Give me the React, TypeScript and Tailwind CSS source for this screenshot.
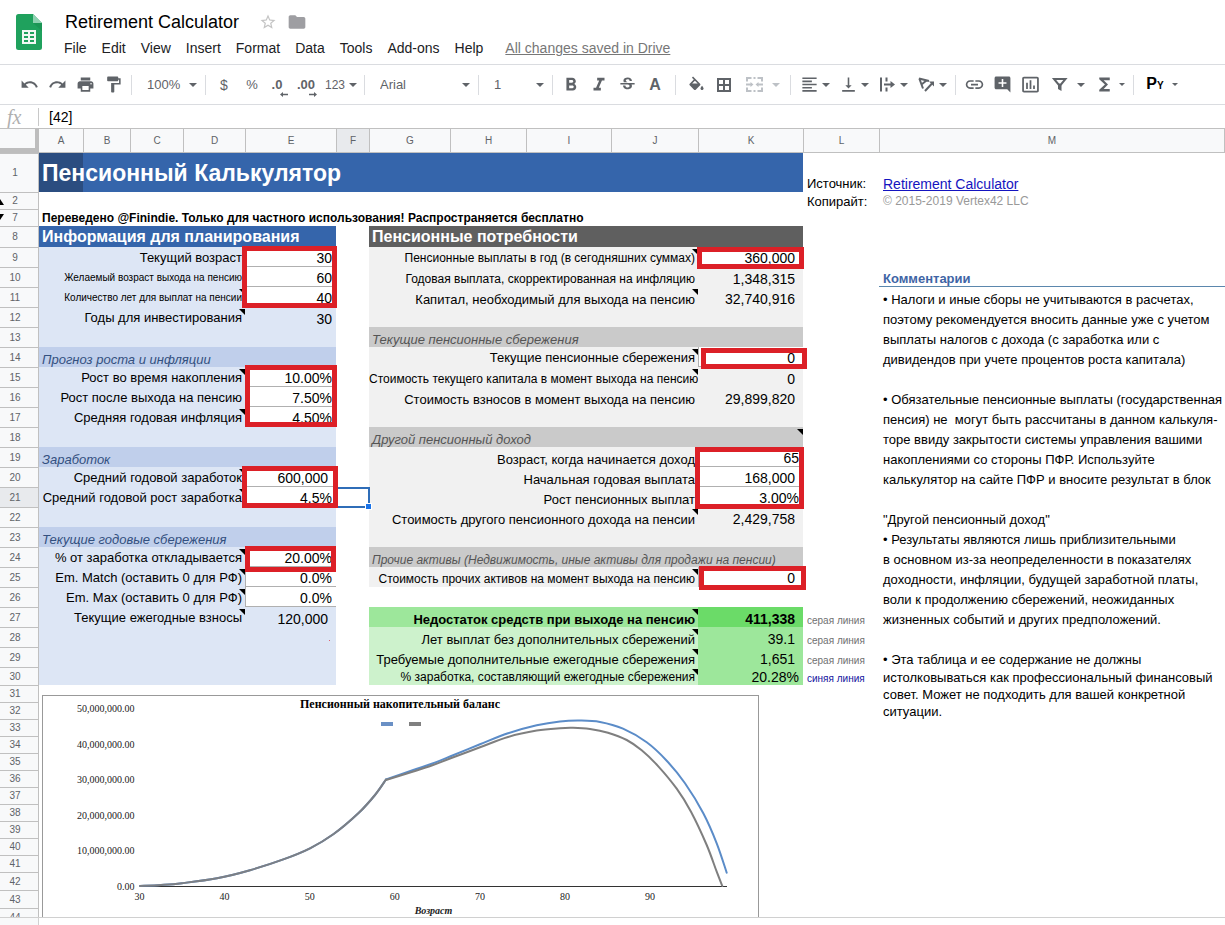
import type { ReactNode } from "react";
import {
  MdAddComment,
  MdFolder,
  MdFormatAlignLeft,
  MdFormatBold,
  MdFormatItalic,
  MdFormatPaint,
  MdFunctions,
  MdInsertChartOutlined,
  MdInsertLink,
  MdPrint,
  MdRedo,
  MdStarBorder,
  MdStrikethroughS,
  MdUndo,
  MdVerticalAlignBottom,
} from "react-icons/md";

const MENUS = ["File", "Edit", "View", "Insert", "Format", "Data", "Tools", "Add-ons", "Help"];

function SheetsLogo() {
  return (
    <svg viewBox="0 0 26 36" className="h-9 w-[26px]" aria-hidden="true">
      <path d="M2.500 0H17l9 9v24.500a2.500 2.500 0 0 1-2.500 2.500h-21A2.500 2.500 0 0 1 0 33.500V2.500A2.500 2.500 0 0 1 2.500 0z" fill="#1fa15d" />
      <path d="M17 0l9 9h-9z" fill="#8ed1b1" />
      <path d="M17 9h9v8z" fill="#188a4d" opacity=".5" />
      <path fillRule="evenodd" fill="#f1f8f4" d="M6 16h14v14H6zM8 18v2h4v-2zM14 18v2h4v-2zM8 22v2h4v-2zM14 22v2h4v-2zM8 26v2h4v-2zM14 26v2h4v-2z" />
    </svg>
  );
}

function Caret({ small = false }: { small?: boolean }) {
  return (
    <svg viewBox="0 0 8 4" className={small ? "h-[3px] w-1.5 shrink-0" : "h-1 w-2 shrink-0"} aria-hidden="true">
      <path d="M0 0h8L4 4z" fill="currentColor" />
    </svg>
  );
}

function Sep({ wide = false }: { wide?: boolean }) {
  return <span className={wide ? "mx-1.5 h-5 w-px shrink-0 bg-[#dadce0]" : "mx-1 h-5 w-px shrink-0 bg-[#dadce0]"} />;
}

function Tool({ label, className = "w-7", children }: { label: string; className?: string; children: ReactNode }) {
  return (
    <button type="button" aria-label={label} className={`flex h-7 shrink-0 items-center justify-center ${className}`}>
      {children}
    </button>
  );
}

function Picker({ label, value, className }: { label: string; value: string; className: string }) {
  return (
    <label className={`relative flex h-7 shrink-0 items-center ${className}`}>
      <select aria-label={label} defaultValue={value} className="h-full w-full appearance-none bg-transparent pl-[11px] text-[13px] outline-none">
        <option>{value}</option>
      </select>
      <span className="pointer-events-none absolute right-1 top-3">
        <Caret />
      </span>
    </label>
  );
}

function FillIcon() {
  return (
    <svg viewBox="0 -2 24 24" className="size-[19px]" fill="currentColor" aria-hidden="true">
      <path d="M16.560 8.940L7.620 0 6.210 1.410l2.380 2.380-5.150 5.150c-.59.59-.59 1.540 0 2.120l5.500 5.500c.29.29.68.44 1.060.44s.77-.15 1.060-.44l5.500-5.500c.59-.58.59-1.530 0-2.120zM6.500 8.700L10 5.210l3.500 3.490zM19 11.500s-2 2.170-2 3.500c0 1.100.9 2 2 2s2-.9 2-2c0-1.330-2-3.500-2-3.500z" />
    </svg>
  );
}

function BordersIcon() {
  return (
    <svg viewBox="0 0 14 14" className="size-3.5" fill="none" stroke="currentColor" strokeWidth="2" aria-hidden="true">
      <path d="M1 1h12v12H1zM7 1v12M1 7h12" />
    </svg>
  );
}

function MergeIcon() {
  return (
    <svg viewBox="0 0 19 19" className="size-[19px]" fill="none" stroke="currentColor" strokeWidth="2" aria-hidden="true">
      <path d="M2 6.500V3h4.500M8.500 3h2M12.500 3H17v3.500M2 12.500V16h4.500M8.500 16h2M12.500 16H17v-3.500M1 9.500h5M13 9.500h5" />
      <path d="M5.500 7v5L8.500 9.500zM13.500 7v5l-3-2.500z" fill="currentColor" stroke="none" />
    </svg>
  );
}

function WrapIcon() {
  return (
    <svg viewBox="0 0 19 19" className="size-[19px]" fill="none" stroke="currentColor" strokeWidth="2" aria-hidden="true">
      <path d="M3 2.500v14M8.500 2.500v4M8.500 12.500v4M6 9.500h8" />
      <path d="M12.500 6l4.500 3.500-4.500 3.500z" fill="currentColor" stroke="none" />
    </svg>
  );
}

function RotateIcon() {
  return (
    <svg viewBox="0 0 19 19" className="size-[19px]" fill="none" stroke="currentColor" aria-hidden="true">
      <path d="M2 3.500l10 2.500M2.300 3.500l3.700 10M9.500 5.500L4.500 9.500" strokeWidth="2" />
      <path d="M8 16l7-7.500" strokeWidth="2" />
      <path d="M12 6.500h5V11.500z" fill="currentColor" stroke="none" />
    </svg>
  );
}

function FilterIcon() {
  return (
    <svg viewBox="0 0 19 19" className="size-[19px]" fill="none" stroke="currentColor" strokeWidth="2" aria-hidden="true">
      <path d="M4 4h11.500l-4.500 5.500H8.500z" />
      <path d="M8 9h3.500v7L8 14z" fill="currentColor" stroke="none" />
    </svg>
  );
}

function Toolbar() {
  const s = "size-[19px]";
  return (
    <div role="toolbar" aria-label="Formatting" className="flex h-10 shrink-0 items-center overflow-hidden border-b border-[#dadce0] pl-[15px] text-[#5f6368]">
      <Tool label="Undo"><MdUndo className={s} /></Tool>
      <Tool label="Redo"><MdRedo className={s} /></Tool>
      <Tool label="Print"><MdPrint className={s} /></Tool>
      <Tool label="Paint format"><MdFormatPaint className={s} /></Tool>
      <Sep />
      <Picker label="Zoom" value="100%" className="w-[65px]" />
      <Sep />
      <Tool label="Format as currency"><span className="text-sm">$</span></Tool>
      <Tool label="Format as percent"><span className="text-[13px]">%</span></Tool>
      <Tool label="Decrease decimal places" className="w-7 pr-1.5">
        <span className="relative text-[13px] font-bold">
          .0
          <svg viewBox="0 0 8 5" className="absolute -right-1.5 bottom-[-3px] h-[5px] w-2" aria-hidden="true">
            <path d="M0 2.500L3 0v1.700h5v1.600H3V5z" fill="currentColor" />
          </svg>
        </span>
      </Tool>
      <Tool label="Increase decimal places" className="w-7 pr-1">
        <span className="relative text-[13px] font-bold">
          .00
          <svg viewBox="0 0 8 5" className="absolute -right-0.5 bottom-[-3px] h-[5px] w-2" aria-hidden="true">
            <path d="M8 2.500L5 0v1.700H0v1.600h5V5z" fill="currentColor" />
          </svg>
        </span>
      </Tool>
      <Tool label="More formats" className="w-[38px] gap-1"><span className="text-[12px]">123</span><Caret /></Tool>
      <Sep />
      <Picker label="Font" value="Arial" className="w-[105px]" />
      <Sep />
      <Picker label="Font size" value="1" className="w-[65px]" />
      <Sep />
      <Tool label="Bold"><MdFormatBold className="size-[22px]" /></Tool>
      <Tool label="Italic"><MdFormatItalic className="size-[22px]" /></Tool>
      <Tool label="Strikethrough"><MdStrikethroughS className={s} /></Tool>
      <Tool label="Text color"><span className="text-base font-bold leading-5">A</span></Tool>
      <Sep wide />
      <Tool label="Fill color"><FillIcon /></Tool>
      <Tool label="Borders"><BordersIcon /></Tool>
      <Tool label="Merge cells" className="w-12 gap-2 text-[#bdc1c6]"><MergeIcon /><Caret /></Tool>
      <Sep />
      <Tool label="Horizontal align" className="w-[39px] gap-[3px]"><MdFormatAlignLeft className={s} /><Caret /></Tool>
      <Tool label="Vertical align" className="w-[39px] gap-[3px]"><MdVerticalAlignBottom className={s} /><Caret /></Tool>
      <Tool label="Text wrapping" className="w-[39px] gap-[3px]"><WrapIcon /><Caret /></Tool>
      <Tool label="Text rotation" className="w-[39px] gap-[3px]"><RotateIcon /><Caret /></Tool>
      <Sep />
      <Tool label="Insert link"><MdInsertLink className="size-[21px]" /></Tool>
      <Tool label="Insert comment"><MdAddComment className={s} /></Tool>
      <Tool label="Insert chart"><MdInsertChartOutlined className="size-[21px]" /></Tool>
      <Tool label="Filter" className="w-[46px] gap-2"><FilterIcon /><Caret /></Tool>
      <Tool label="Functions" className="w-[39px] gap-1"><MdFunctions className="size-[21px]" /><Caret small /></Tool>
      <Sep />
      <Tool label="Input tools" className="w-12 gap-2">
        <span className="text-base font-bold leading-5 text-black">P<span className="text-[10px]">Y</span></span>
        <Caret small />
      </Tool>
    </div>
  );
}

/* ---------- sheet data ---------- */

type Frame = "e3a" | "e3b" | "e2" | "e1" | "k9" | "k14" | "k3" | "k25";

const FRAMES: Record<Frame, string> = {
  e3a: "-left-1 -right-px -top-px h-[62px]",
  e3b: "-left-px -right-px -top-0.5 h-[62px]",
  e2: "-left-1 -right-0.5 -top-px h-[42px]",
  e1: "-left-px right-0 -top-px h-[26px]",
  k9: "-left-0.5 -right-px top-0 h-[22px]",
  k14: "left-0.5 -right-1 top-px h-[21px]",
  k3: "-left-1 -right-px top-0 h-[62px]",
  k25: "left-0 -right-[3px] -top-px h-6",
};

type Size = "xs" | "s" | "m";

const SIZES: Record<Size, string> = {
  xs: "text-[10px]",
  s: "text-[12px]",
  m: "text-[13px]",
};

interface Side {
  kind?: "head" | "section" | "body" | "total";
  label?: string;
  size?: Size;
  high?: boolean;
  note?: boolean;
  value?: string;
  entry?: boolean;
  tight?: boolean;
  frame?: Frame;
  valueNote?: boolean;
}

interface Row {
  n: number;
  h: string;
  left?: Side;
  right?: Side;
  legend?: string;
  comment?: string;
}

const H = "h-5";
const S = "h-[17px]";
const T = "h-[18px]";

const ROWS: Row[] = [
  { n: 8, h: "h-[21px]", left: { kind: "head", label: "Информация для планирования" }, right: { kind: "head", label: "Пенсионные потребности" } },
  { n: 9, h: H, left: { label: "Текущий возраст", value: "30", entry: true, tight: true, frame: "e3a" }, right: { label: "Пенсионные выплаты в год (в сегодняшних суммах)", size: "s", high: true, note: true, value: "360,000", entry: true, frame: "k9" } },
  { n: 10, h: H, left: { label: "Желаемый возраст выхода на пенсию", size: "xs", value: "60", entry: true, tight: true }, right: { label: "Годовая выплата, скорректированная на инфляцию", size: "s", value: "1,348,315" }, comment: "Комментарии" },
  { n: 11, h: H, left: { label: "Количество лет для выплат на пенсии", size: "xs", note: true, value: "40", entry: true, tight: true }, right: { label: "Капитал, необходимый для выхода на пенсию", note: true, value: "32,740,916" }, comment: "• Налоги и иные сборы не учитываются в расчетах," },
  { n: 12, h: H, left: { label: "Годы для инвестирования", note: true, value: "30", tight: true }, right: {}, comment: "поэтому рекомендуется вносить данные уже с учетом" },
  { n: 13, h: H, left: {}, right: { kind: "section", label: "Текущие пенсионные сбережения" }, comment: "выплаты налогов с дохода (с заработка или с" },
  { n: 14, h: H, left: { kind: "section", label: "Прогноз роста и инфляции" }, right: { label: "Текущие пенсионные сбережения", high: true, note: true, value: "0", entry: true, frame: "k14" }, comment: "дивидендов при учете процентов роста капитала)" },
  { n: 15, h: H, left: { label: "Рост во время накопления", note: true, value: "10.00%", entry: true, tight: true, frame: "e3b" }, right: { label: "Стоимость текущего капитала в момент выхода на пенсию", size: "s", note: true, value: "0" } },
  { n: 16, h: H, left: { label: "Рост после выхода на пенсию", value: "7.50%", entry: true, tight: true }, right: { label: "Стоимость взносов в момент выхода на пенсию", value: "29,899,820" }, comment: "• Обязательные пенсионные выплаты (государственная" },
  { n: 17, h: H, left: { label: "Средняя годовая инфляция", note: true, value: "4.50%", entry: true, tight: true }, right: {}, comment: "пенсия) не  могут быть рассчитаны в данном калькуля-" },
  { n: 18, h: H, left: {}, right: { kind: "section", label: "Другой пенсионный доход", valueNote: true }, comment: "торе ввиду закрытости системы управления вашими" },
  { n: 19, h: H, left: { kind: "section", label: "Заработок" }, right: { label: "Возраст, когда начинается доход", value: "65", entry: true, tight: true, frame: "k3" }, comment: "накоплениями со стороны ПФР. Используйте" },
  { n: 20, h: H, left: { label: "Средний годовой заработок", note: true, value: "600,000", entry: true, frame: "e2" }, right: { label: "Начальная годовая выплата", value: "168,000", entry: true }, comment: "калькулятор на сайте ПФР и вносите результат в блок" },
  { n: 21, h: H, left: { label: "Средний годовой рост заработка", note: true, value: "4.5%", entry: true, tight: true }, right: { label: "Рост пенсионных выплат", value: "3.00%", entry: true, tight: true } },
  { n: 22, h: H, left: {}, right: { label: "Стоимость другого пенсионного дохода на пенсии", note: true, value: "2,429,758" }, comment: "\"Другой пенсионный доход\"" },
  { n: 23, h: H, left: { kind: "section", label: "Текущие годовые сбережения" }, right: {}, comment: "• Результаты являются лишь приблизительными" },
  { n: 24, h: H, left: { label: "% от заработка откладывается", note: true, value: "20.00%", entry: true, tight: true, frame: "e1" }, right: { kind: "section", label: "Прочие активы (Недвижимость, иные активы для продажи на пенсии)", size: "s" }, comment: "в основном из-за неопределенности в показателях" },
  { n: 25, h: H, left: { label: "Em. Match (оставить 0 для РФ)", note: true, value: "0.0%", entry: true, tight: true }, right: { label: "Стоимость прочих активов на момент выхода на пенсию", size: "s", note: true, value: "0", entry: true, frame: "k25" }, comment: "доходности, инфляции, будущей заработной платы," },
  { n: 26, h: H, left: { label: "Em. Max (оставить 0 для РФ)", note: true, value: "0.0%", entry: true, tight: true }, comment: "воли к продолжению сбережений, неожиданных" },
  { n: 27, h: H, left: { label: "Текущие ежегодные взносы", note: true, value: "120,000" }, right: { kind: "total", label: "Недостаток средств при выходе на пенсию", note: true, value: "411,338" }, legend: "серая линия", comment: "жизненных событий и других предположений." },
  { n: 28, h: H, left: {}, right: { kind: "total", label: "Лет выплат без дополнительных сбережений", note: true, value: "39.1" }, legend: "серая линия" },
  { n: 29, h: H, left: {}, right: { kind: "total", label: "Требуемые дополнительные ежегодные сбережения", note: true, value: "1,651" }, legend: "серая линия", comment: "• Эта таблица и ее содержание не должны" },
  { n: 30, h: T, left: {}, right: { kind: "total", label: "% заработка, составляющий ежегодные сбережения", size: "s", note: true, value: "20.28%", tight: true }, legend: "синяя линия", comment: "истолковываться как профессиональный финансовый" },
  { n: 31, h: S, comment: "совет. Может не подходить для вашей конкретной" },
  { n: 32, h: S, comment: "ситуации." },
  ...[33, 34, 35, 36, 37, 38, 39, 40, 41].map((n) => ({ n, h: S })),
  { n: 42, h: T },
  { n: 43, h: T },
  { n: 44, h: T },
];

/* ---------- chart ---------- */

type Point = [number, number];

const GROWTH: Point[] = [[98, 191], [119, 190], [140, 188.2], [175, 183.3], [208, 175.2], [241.3, 164.4], [268, 153.3], [291.3, 139.3], [316.3, 118.3], [333, 100], [344, 84.5]];
const BLUE_TAIL: Point[] = [[344, 84.5], [371.3, 75], [389.7, 68.8], [408, 61.5], [438, 49.3], [466, 38.3], [494.7, 30.3], [518, 26.5], [538, 25.6], [558, 27], [581, 33.7], [604.7, 47.3], [624.7, 65.7], [643, 88.3], [661.3, 118.3], [674.7, 148.3], [684.7, 177.7]];
const GRAY_TAIL: Point[] = [[344, 85], [371.3, 76.5], [389.7, 70.5], [408, 63.5], [438, 52.3], [466, 42], [494.7, 35.6], [518, 33.2], [531, 32.8], [548, 34], [566, 37.7], [584.7, 45], [599.7, 55.3], [616.3, 71.3], [634.7, 93.7], [649, 116.7], [664.7, 150], [674.7, 176.7], [680.3, 191]];

const Y_TICKS = ["50,000,000.00", "40,000,000.00", "30,000,000.00", "20,000,000.00", "10,000,000.00", "0.00"];
const X_TICKS = [30, 40, 50, 60, 70, 80, 90];

function smooth(points: Point[]): string {
  let d = `M${points[0][0]} ${points[0][1]}`;
  for (let i = 0; i < points.length - 1; i++) {
    const a = points[Math.max(i - 1, 0)];
    const b = points[i];
    const c = points[i + 1];
    const e = points[Math.min(i + 2, points.length - 1)];
    d += `C${b[0] + (c[0] - a[0]) / 6} ${b[1] + (c[1] - a[1]) / 6} ${c[0] - (e[0] - b[0]) / 6} ${c[1] - (e[1] - b[1]) / 6} ${c[0]} ${c[1]}`;
  }
  return d;
}

function BalanceChart() {
  return (
    <figure className="absolute left-[3px] top-2.5 z-10 h-[260px] w-[717px] border border-[#999] bg-white">
      <svg viewBox="1 1 715 258" className="h-[258px] w-[715px]" role="img" aria-label="Пенсионный накопительный баланс" fontFamily="'Liberation Serif', serif" fontSize="10" fill="#222">
        <text x="358" y="13" textAnchor="middle" fontSize="12" fontWeight="bold" fill="#000">Пенсионный накопительный баланс</text>
        <rect x="339" y="27" width="12" height="4" fill="#6a90c5" />
        <rect x="367" y="27" width="12" height="4" fill="#808080" />
        {Y_TICKS.map((t, i) => (
          <text key={t} x="92.500" y={17 + i * 35.6} textAnchor="end">{t}</text>
        ))}
        <path d="M98 191.500H685" stroke="#333" strokeWidth="1" />
        <g fill="none" strokeWidth="2" strokeLinecap="round">
          <path d={smooth(GROWTH)} stroke="#5f8dc9" />
          <path d={smooth(BLUE_TAIL)} stroke="#5b8cc8" />
          <path d={smooth(GROWTH)} stroke="#7c7f84" />
          <path d={smooth(GRAY_TAIL)} stroke="#7f7f7f" />
        </g>
        {X_TICKS.map((t, i) => (
          <text key={t} x={97.500 + i * 85.1} y="205" textAnchor="middle">{t}</text>
        ))}
        <text x="391.500" y="219" textAnchor="middle" fontWeight="bold" fontStyle="italic">Возраст</text>
      </svg>
    </figure>
  );
}

/* ---------- grid ---------- */

function Note() {
  return (
    <svg viewBox="0 0 6 6" className="absolute right-0 top-0.5 size-1.5" aria-hidden="true">
      <path d="M0 0h6v6z" fill="#000" />
    </svg>
  );
}

function RowHeader({ n, h }: { n: number; h: string }) {
  return (
    <th scope="row" className={`relative border-r border-t border-[#c0c0c0] pr-2 text-center align-middle text-[10px] font-normal leading-[14px] text-[#5f6368] ${h} ${n === 21 ? "bg-[#e8eaed]" : "bg-[#f8f9fa]"}`}>
      {n}
      {n === 2 && (
        <svg viewBox="0 0 4 6" className="absolute bottom-1 left-0 h-1.5 w-1" aria-hidden="true"><path d="M0 0l4 6H0z" /></svg>
      )}
      {n === 7 && (
        <svg viewBox="0 0 4 6" className="absolute left-0 top-1 h-1.5 w-1" aria-hidden="true"><path d="M0 0h4L0 6z" /></svg>
      )}
    </th>
  );
}

function SideCells({ side, blue, n }: { side?: Side; blue: boolean; n: number }) {
  if (!side) {
    return (
      <>
        <td colSpan={4} className="relative">{blue && n === 31 && <BalanceChart />}</td>
        <td />
      </>
    );
  }
  if (side.kind === "head") {
    return (
      <td colSpan={5} className={`pl-[3px] align-middle text-base font-bold leading-5 text-white ${blue ? "bg-[#3565ab]" : "bg-[#5f5f5f]"}`}>
        {side.label}
      </td>
    );
  }
  if (side.kind === "section") {
    return (
      <td colSpan={5} className={`relative pl-[3px] align-bottom italic leading-[14px] ${SIZES[side.size ?? "m"]} ${blue ? "bg-[#c0cfeb] text-[#33507f]" : "bg-[#cacaca] text-[#555]"}`}>
        {side.label}
        {side.valueNote && <Note />}
      </td>
    );
  }
  const total = side.kind === "total";
  const strong = total && n === 27;
  const labelBg = total ? (strong ? "bg-[#9de79b]" : "bg-[#cdf2cc]") : blue ? "bg-[#dde6f5]" : "bg-[#f1f1f1]";
  const valueBg = total ? (strong ? "bg-[#6bdb68]" : "bg-[#9de79b]") : side.entry ? "bg-white" : labelBg;
  const lift = blue || side.high ? "leading-[18px]" : "leading-[15px]";
  return (
    <>
      <td colSpan={4} className={`relative pr-[3px] text-right align-bottom ${lift} ${SIZES[side.size ?? "m"]} ${labelBg} ${strong ? "font-bold" : ""}`}>
        {side.label}
        {side.note && <Note />}
      </td>
      <td className={`relative text-right align-bottom text-[14px] leading-4 ${side.tight ? "pr-1" : "pr-2"} ${valueBg} ${side.entry ? "border-b border-l border-[#b0b0b0]" : ""} ${strong ? "font-bold" : ""}`}>
        {side.value}
        {blue && n === 28 && <span className="absolute bottom-1.5 right-1.5 size-px bg-[#e06070]" />}
        {side.frame && <span className={`pointer-events-none absolute z-10 border-[5px] border-[#dc2027] ${FRAMES[side.frame]}`} />}
      </td>
    </>
  );
}

function Sheet() {
  const columns = "ABCDEFGHIJKLM".split("");
  return (
    <table className="w-full table-fixed border-separate border-spacing-0 whitespace-pre text-black">
      <colgroup>
        <col className="w-[39px]" />
        <col className="w-[44px]" />
        <col className="w-[47px]" />
        <col className="w-[53px]" />
        <col className="w-[62px]" />
        <col className="w-[91px]" />
        <col className="w-[33px]" />
        <col className="w-[81px]" />
        <col className="w-[76px]" />
        <col className="w-[85px]" />
        <col className="w-[87px]" />
        <col className="w-[105px]" />
        <col className="w-[76px]" />
        <col />
      </colgroup>
      <thead>
        <tr>
          <th className="h-[25px] border-b-[5px] border-r-4 border-t border-b-[#bdbdbd] border-r-[#bdbdbd] border-t-[#c0c0c0] bg-[#f8f9fa]" />
          {columns.map((c) => (
            <th key={c} scope="col" className={`h-[25px] border-y border-[#c0c0c0] text-center align-middle text-[10px] font-normal leading-4 text-[#5f6368] ${c === "A" ? "" : "border-l"} ${c === "M" ? "border-r" : ""} ${c === "F" ? "bg-[#e8eaed]" : "bg-[#f8f9fa]"}`}>
              {c}
            </th>
          ))}
        </tr>
      </thead>
      <tbody>
        <tr>
          <RowHeader n={1} h="h-[39px]" />
          <td colSpan={11} className="relative bg-[#3565ab] pl-[3px] align-middle text-[23px] font-bold leading-8 text-white">
            <span className="absolute inset-y-0 left-0 w-[44px] bg-[#2b4d80]" />
            <span className="relative">Пенсионный Калькулятор</span>
          </td>
          <td className="pl-1 align-bottom text-[13px] leading-4">Источник:</td>
          <td className="pl-1 align-bottom text-[14px] leading-4">
            <a href="#source" className="text-[#1414c0] underline">Retirement Calculator</a>
          </td>
        </tr>
        <tr>
          <RowHeader n={2} h={S} />
          <td colSpan={11} />
          <td className="pl-1 align-bottom text-[13px] leading-[15px]">Копирайт:</td>
          <td className="pl-1 align-bottom text-[12px] leading-[15px] text-[#999]">© 2015-2019 Vertex42 LLC</td>
        </tr>
        <tr>
          <RowHeader n={7} h={S} />
          <td colSpan={11} className="pl-[3px] align-bottom text-[12px] font-bold leading-[15px]">
            Переведено @Finindie. Только для частного использования! Распространяется бесплатно
          </td>
          <td />
          <td />
        </tr>
        {ROWS.map((r) => (
          <tr key={r.n}>
            <RowHeader n={r.n} h={r.h} />
            <SideCells side={r.left} blue n={r.n} />
            <td className="relative">
              {r.n === 21 && (
                <span className="absolute -bottom-px -right-px left-0 top-0 z-[5] border-2 border-[#2f6db8]">
                  <span className="absolute -bottom-1 -right-1 size-[7px] border border-white bg-[#1a73e8]" />
                </span>
              )}
            </td>
            <SideCells side={r.right} blue={false} n={r.n} />
            <td className={`pl-1 align-bottom text-[10px] leading-[12px] ${r.n === 30 ? "text-[#1414a0]" : "text-[#707070]"}`}>{r.legend}</td>
            <td className={r.n === 10 ? "border-b border-[#5b87ad] pl-1 align-bottom text-[13px] font-bold leading-[14px] text-[#3f65a5]" : "pl-1 align-bottom text-[13px] leading-[14px]"}>{r.comment}</td>
          </tr>
        ))}
      </tbody>
    </table>
  );
}

export default function App() {
  return (
    <div className="flex h-screen flex-col overflow-hidden bg-white font-['Liberation_Sans',Arial,sans-serif] text-[#202124]">
      <header className="flex h-[65px] shrink-0 items-start border-b border-[#dadce0] pl-4">
        <div className="pt-3.5"><SheetsLogo /></div>
        <div className="pl-[15px] pt-2.5">
          <div className="flex h-6 items-center pl-2">
            <h1 className="text-lg leading-6 text-black">Retirement Calculator</h1>
            <button type="button" aria-label="Star" className="ml-5 text-[#c4c4c4]"><MdStarBorder className="size-[18px]" /></button>
            <button type="button" aria-label="Move to folder" className="ml-2.5 text-[#9e9ea2]"><MdFolder className="size-5" /></button>
          </div>
          <nav className="flex h-7 items-center gap-px text-sm" aria-label="Menu">
            {MENUS.map((m) => (
              <button key={m} type="button" className="px-[7px]">{m}</button>
            ))}
            <a href="#history" className="ml-3.5 text-[#777] underline">All changes saved in Drive</a>
          </nav>
        </div>
      </header>
      <Toolbar />
      <div className="flex h-[23px] shrink-0 items-center">
        <label htmlFor="formula" className="w-[38px] pl-[7px] font-['Liberation_Serif',serif] text-xl italic leading-5 text-[#b0b0b0]">fx</label>
        <span className="h-[18px] w-px bg-[#c8c8c8]" />
        <input id="formula" defaultValue="[42]" className="ml-2.5 h-full min-w-0 flex-1 bg-transparent text-sm text-black outline-none" />
      </div>
      <main className="min-h-0 flex-1 overflow-hidden">
        <Sheet />
      </main>
      <footer className="flex h-2 shrink-0 border-t border-[#d0d0d0]">
        <span className="w-[39px] border-r border-[#d0d0d0] bg-[#f8f9fa]" />
      </footer>
    </div>
  );
}
